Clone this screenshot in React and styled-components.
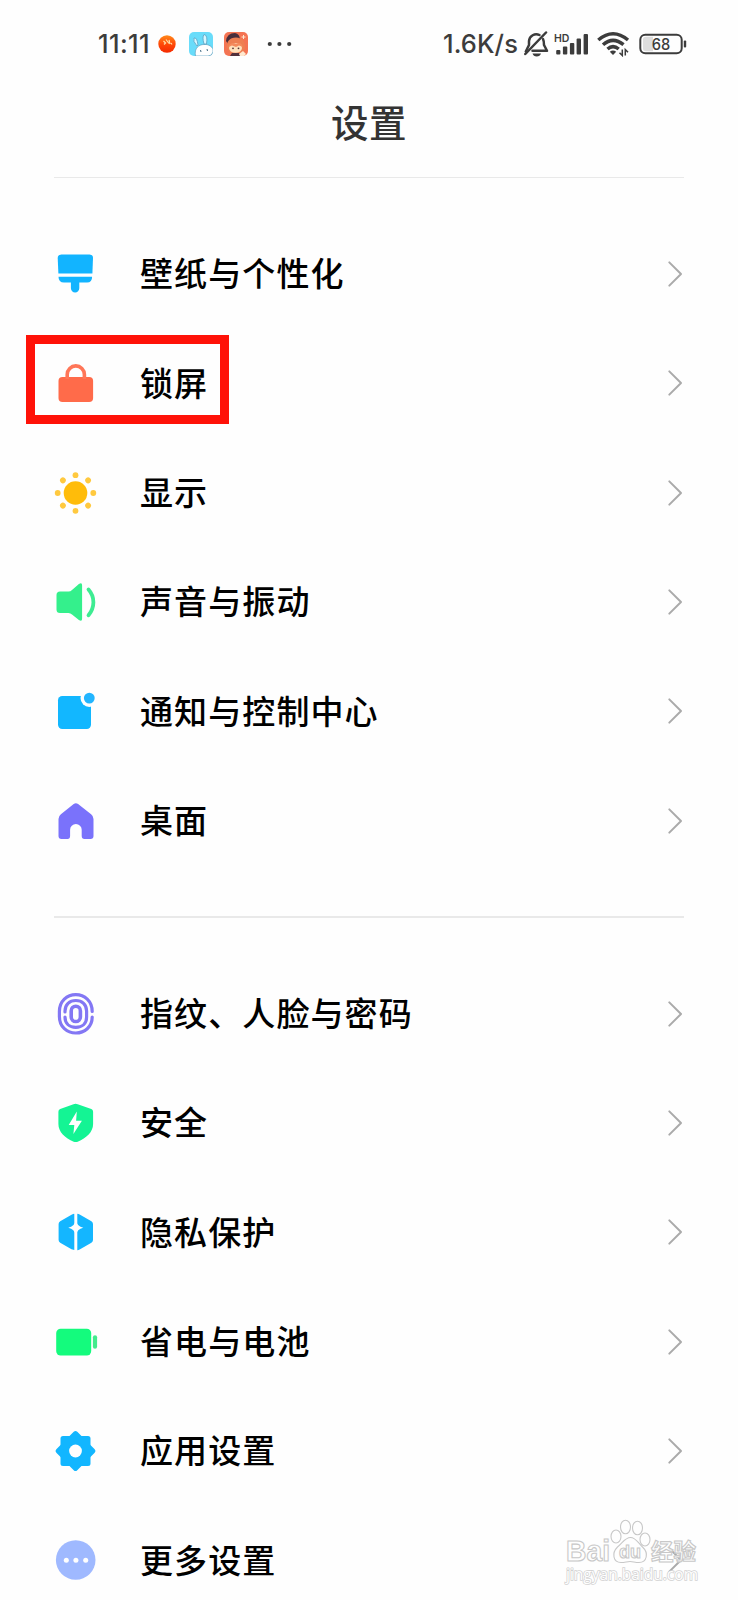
import React from "react";
import styled, { createGlobalStyle } from "styled-components";

const GlobalStyle = createGlobalStyle`
  * { box-sizing: border-box; }
  body { margin: 0; background: #fefefe; }
`;

const Screen = styled.div`
  position: relative;
  width: 738px;
  height: 1600px;
  overflow: hidden;
  background: #fefefe;
  color: #000;
  font-family: "Noto Sans CJK SC", "Noto Sans", sans-serif;
`;

const StatusBar = styled.header`
  display: flex;
  justify-content: space-between;
  height: 88px;
  padding: 0 51px 0 98px;
  color: #3c3c3c;
`;

const StatusGroup = styled.div`
  display: flex;
  align-items: center;
`;

const StatusText = styled.span`
  width: ${(p) => p.$width}px;
  font-family: Inter, sans-serif;
  font-size: 25.5px;
  font-weight: 500;
  line-height: 30px;
  letter-spacing: ${(p) => p.$spacing}px;
  white-space: nowrap;
`;

const StatusIcon = styled.svg`
  display: block;
  flex: none;
  margin-left: ${(p) => p.$gap || 0}px;
`;

const TitleBar = styled.div`
  height: 88.5px;
  display: flex;
  justify-content: center;
  padding-top: 5.5px;
`;

const Title = styled.h1`
  margin: 0;
  color: #333;
  font-size: 37.5px;
  line-height: 54px;
  letter-spacing: 0.6px;
  font-weight: 500;
`;

const Divider = styled.hr`
  height: 1.5px;
  margin: 0 54px;
  border: 0;
  background: #e9e9e9;
`;

const List = styled.ul`
  list-style: none;
  margin: 0;
  padding: ${(p) => p.$top}px 54px ${(p) => p.$bottom}px 53px;
`;

const Row = styled.li`
  position: relative;
  display: flex;
  align-items: center;
  height: 109.36px;
`;

const RowIcon = styled.svg`
  flex: none;
  width: 44px;
  height: 44px;
  overflow: visible;
`;

const Label = styled.span`
  flex: 1;
  margin-left: 43px;
  padding-bottom: 3.4px;
  font-size: 33px;
  line-height: 48px;
  letter-spacing: 1.1px;
  font-weight: 500;
`;

const Chevron = styled.svg`
  flex: none;
  width: 17px;
  height: 28px;
`;

const Highlight = styled.div`
  position: absolute;
  left: -27px;
  top: 6.3px;
  width: 203px;
  height: 89px;
  border: 9px solid #ff1208;
`;

const Watermark = styled.svg`
  position: absolute;
  left: 560px;
  top: 1510px;
`;

const icons = {
  brush: (
    <g fill="#12b4ff">
      <path d="M8 2.5H36Q39.6 2.5 39.5 6L38.9 21.6H4.9L4.2 6Q4.2 2.5 8 2.5Z" />
      <path d="M5 24.8H38.6Q38.7 30.6 33.5 30.6H25.8V36.3A4.2 4.2 0 0 1 17.4 36.3V30.6H10.5Q5 30.6 5 24.8Z" />
    </g>
  ),
  lock: (
    <g>
      <rect x="5" y="16" width="34.6" height="25" rx="4" fill="#ff6b4a" />
      <path d="M13.7 18V13.5A8.6 8.6 0 0 1 30.9 13.5V18" fill="none" stroke="#ff7658" strokeWidth="3.6" />
    </g>
  ),
  sun: (
    <g fill="#ffc93f">
      <circle cx="22" cy="22" r="11.8" fill="#ffbc0a" />
      {[0, 45, 90, 135, 180, 225, 270, 315].map((a) => (
        <circle key={a} cx="22" cy="4.2" r="2.9" transform={`rotate(${a} 22 22)`} />
      ))}
    </g>
  ),
  sound: (
    <g>
      <path d="M6.5 11.5H15Q17 11.5 18.5 10L25.4 4Q28.6 1.8 28.6 5.4V38.6Q28.6 42.2 25.4 40L18.5 34.5Q17 33 15 33H6.5Q3 33 3 29.5V15Q3 11.5 6.5 11.5Z" fill="#34f08c" />
      <path d="M35 9.5Q39.9 15 39.9 22.2T35 35.2" fill="none" stroke="#3eec92" strokeWidth="3.8" strokeLinecap="round" />
    </g>
  ),
  notify: (
    <g>
      <rect x="4.5" y="7" width="33" height="33" rx="4.2" fill="#12b7ff" />
      <circle cx="35.8" cy="9.1" r="8.8" fill="#fefefe" />
      <circle cx="35.8" cy="9.1" r="5.4" fill="#22b5ff" />
    </g>
  ),
  home: (
    <path d="M20.2 5Q22.4 3.5 24.6 5L37.6 15.2Q40 17 40 20V37Q40 40 37 40H31Q28.2 40 28.2 37V30.8A5.8 5.8 0 0 0 16.6 30.8V37Q16.6 40 14 40H8Q5 40 5 37V20Q5 17 7.4 15.2Z" fill="#7a72fb" />
  ),
  finger: (
    <g fill="none" stroke="#8377f4" strokeWidth="3.2" strokeLinecap="round">
      <path d="M38.7 19.5C38.7 9 31 2.6 22.3 2.6S5.9 9 5.9 19.5V24.5C5.9 35 13.6 41 22.3 41S38.7 35 38.7 25" />
      <path d="M11.5 20V19C11.5 12.5 16 8.5 22.3 8.5S33.1 12.5 33.1 19V25C33.1 31.5 28.6 35.3 22.3 35.3S11.5 31.5 11.5 25" />
      <rect x="17.7" y="14.3" width="9.2" height="15.2" rx="4.6" strokeWidth="3.6" />
    </g>
  ),
  shield: (
    <g>
      <path d="M20 3.2Q22 2.4 24.2 3.2L37.8 8Q39.6 8.8 39.6 10.8V23C39.6 31 33 37 24.2 40.7Q22.2 41.4 20.2 40.7C11.5 37 4.9 31 4.9 23V10.8Q4.9 8.8 6.7 8Z" fill="#14f494" />
      <path d="M23.3 10.5L15.2 24H20.8L19.9 33L28.4 19.7H22.6Z" fill="#fefefe" />
    </g>
  ),
  privacy: (
    <g>
      <path d="M20.8 4V40L18 39.2L6.7 32.7Q5.1 31.8 5.1 30V14Q5.1 12.2 6.7 11.3L18 4.8Q20.8 3.3 20.8 4ZM23.8 4V40Q23.8 40.7 26.6 39.2L37.9 32.7Q39.5 31.8 39.5 30V14Q39.5 12.2 37.9 11.3L26.6 4.8Q23.8 3.3 23.8 4Z" fill="#14b6ff" />
      <path d="M22.3 10Q23.5 16.6 29.8 17.8Q23.5 19 22.3 25.6Q21.1 19 14.8 17.8Q21.1 16.6 22.3 10Z" fill="#fefefe" />
    </g>
  ),
  battery: (
    <g fill="#14fb7d">
      <rect x="2.7" y="8.7" width="35" height="26.8" rx="4.4" />
      <rect x="39.4" y="15.2" width="4.2" height="13.6" rx="2.1" fill="#42eb8c" />
    </g>
  ),
  gear: (
    <g>
      <g fill="#12b6ff" stroke="#12b6ff" strokeWidth="5" strokeLinejoin="round">
        <rect x="9.5" y="9.5" width="25" height="25" />
        <rect x="9.7" y="9.7" width="24.6" height="24.6" transform="rotate(45 22 22)" />
      </g>
      <circle cx="22" cy="22" r="6.4" fill="#fefefe" />
    </g>
  ),
  more: (
    <g>
      <circle cx="22.2" cy="22" r="19.8" fill="#9fb9ff" />
      <g fill="#fefefe">
        <circle cx="12.8" cy="22.3" r="2.5" />
        <circle cx="22.4" cy="22.3" r="2.5" />
        <circle cx="32.2" cy="22.3" r="2.5" />
      </g>
    </g>
  ),
};

const personal = [
  { icon: "brush", label: "壁纸与个性化" },
  { icon: "lock", label: "锁屏", highlighted: true },
  { icon: "sun", label: "显示" },
  { icon: "sound", label: "声音与振动" },
  { icon: "notify", label: "通知与控制中心" },
  { icon: "home", label: "桌面" },
];

const system = [
  { icon: "finger", label: "指纹、人脸与密码" },
  { icon: "shield", label: "安全" },
  { icon: "privacy", label: "隐私保护" },
  { icon: "battery", label: "省电与电池" },
  { icon: "gear", label: "应用设置" },
  { icon: "more", label: "更多设置" },
];

function SettingsRow({ icon, label, highlighted }) {
  return (
    <Row>
      <RowIcon viewBox="-0.5 0 44 44">{icons[icon]}</RowIcon>
      <Label>{label}</Label>
      <Chevron viewBox="0 0 17 28">
        <path d="M2.3 2.4L14 14L2.3 25.6" fill="none" stroke="#aaa" strokeWidth="2" strokeLinecap="round" strokeLinejoin="round" />
      </Chevron>
      {highlighted && <Highlight />}
    </Row>
  );
}

function Status() {
  return (
    <StatusBar>
      <StatusGroup>
        <StatusText $width={60} $spacing={0.4}>11:11</StatusText>
        <StatusIcon width="18" height="18" viewBox="0 0 18 18">
          <defs>
            <linearGradient id="ball" x1="0" y1="0" x2="0" y2="1">
              <stop offset="0" stopColor="#ff8a1c" />
              <stop offset="0.5" stopColor="#ff4a08" />
              <stop offset="1" stopColor="#f42a00" />
            </linearGradient>
          </defs>
          <circle cx="9" cy="9" r="8.7" fill="url(#ball)" />
          <path d="M5.5 6L8 8.5M8 4.5L11 8.5M11 5L12 9M6 8.5L7 9.5M13 8L14 9.5" stroke="#ffe0a8" strokeWidth="1.2" />
        </StatusIcon>
        <StatusIcon $gap={13} width="24" height="24" viewBox="0 0 24 24">
          <rect width="24" height="24" rx="5" fill="#69dcfa" />
          <path d="M6.5 24C5 16 10 12.5 15 12.5C20 12 23 15 24 17V20Q23 24 19 24Z" fill="#fff" stroke="#5a9fc0" strokeWidth="0.7" />
          <path d="M8 14Q3.5 9 5 6Q8 5 9 13ZM15 12Q13 5 15 2.5Q19 3 17.5 12Z" fill="#d8f7ff" stroke="#5a9fc0" strokeWidth="0.8" />
          <path d="M11.5 18L12 20M18 17L18.5 19" stroke="#426b83" strokeWidth="1" />
        </StatusIcon>
        <StatusIcon $gap={10.5} width="24" height="24" viewBox="0 0 24 24">
          <rect width="24" height="24" rx="5" fill="#f47453" />
          <path d="M2 9Q3 1 11 1Q16 2 16 8L4 12Z" fill="#482f3c" />
          <path d="M3 16Q2 6 12 5.5Q22 6 21 17L18 21H6Z" fill="#ee7f52" />
          <ellipse cx="11.5" cy="16" rx="6.5" ry="4.8" fill="#ffe2bd" />
          <path d="M4.5 15Q7 9 12 12Q17 9 19 15L15 13.5L12 15L8 13.5Z" fill="#f58a5c" />
          <circle cx="9" cy="16.3" r="0.9" fill="#573438" />
          <circle cx="14.5" cy="16.3" r="0.9" fill="#573438" />
          <path d="M6 24L8 21H15L17 24Z" fill="#51313c" />
          <path d="M15 22L19 19L22 22L20 24H16Z" fill="#ffe9d0" />
          <path d="M19.5 3V7M17.5 5H21.5" stroke="#ffe9d0" strokeWidth="1" />
        </StatusIcon>
        <StatusIcon $gap={19} width="26" height="6" viewBox="0 0 26 6">
          <g fill="#3c3c3c">
            <circle cx="2.8" cy="3" r="2.1" />
            <circle cx="12.4" cy="3" r="2.1" />
            <circle cx="22.2" cy="3" r="2.1" />
          </g>
        </StatusIcon>
      </StatusGroup>
      <StatusGroup>
        <StatusText $width={81} $spacing={0.1}>1.6K/s</StatusText>
        <StatusIcon width="26" height="28" viewBox="1 0 26 28">
          <g fill="none" stroke="#3c3c3c" strokeWidth="2.5" strokeLinecap="round" strokeLinejoin="round">
            <path d="M16.5 5A7.3 7.3 0 0 0 6 11V15L2.8 21.5" />
            <path d="M20 9Q21 11 21 15L24 20.8H9.5" />
            <path d="M23 2.5L2.3 24" />
          </g>
          <path d="M9.5 23.5H18Q17 26.5 13.7 26.5T9.5 23.5Z" fill="#3c3c3c" />
        </StatusIcon>
        <StatusIcon $gap={4} width="37" height="24" viewBox="0.6 0 37 24">
          <text x="0.5" y="10.3" fontFamily="Inter, sans-serif" fontWeight="600" fontSize="10.5" textLength="15.5" fill="#3c3c3c">HD</text>
          <g fill="#3c3c3c">
            <rect x="2.8" y="18" width="4.2" height="4.5" rx="1" />
            <rect x="9.5" y="14.5" width="4.4" height="8" rx="1" />
            <rect x="16.5" y="11" width="4.4" height="11.5" rx="1" />
            <rect x="23.2" y="6.5" width="4.4" height="16" rx="1" />
            <rect x="30.2" y="2" width="4.4" height="20.5" rx="1" />
          </g>
        </StatusIcon>
        <StatusIcon $gap={6} width="33" height="26" viewBox="0 0 33 26">
          <g fill="none" stroke="#3c3c3c" strokeWidth="3.5">
            <path d="M1.3 9Q16 -3.5 31 9" />
            <path d="M6 13.7Q16 5 26.5 13.7" />
            <path d="M10.5 18Q16 13.3 21.7 18" />
          </g>
          <path d="M12.8 20.7Q16 18.5 19.2 20.7L16 24Z" fill="#3c3c3c" />
          <path d="M25.3 18.5V24.5L22.5 21.8M28.3 24.5V18.5L31 21.3" fill="none" stroke="#3c3c3c" strokeWidth="1.5" />
        </StatusIcon>
        <StatusIcon $gap={9} width="48" height="22" viewBox="0 0 48 22">
          <rect x="1.3" y="1.7" width="41.4" height="18.6" rx="5" fill="none" stroke="#3c3c3c" strokeWidth="2" />
          <path d="M7 3.7H14V18.3H7Q4 18.3 4 15.5V6.5Q4 3.7 7 3.7Z" fill="#dedede" />
          <rect x="44.8" y="7.5" width="2.4" height="7" rx="1" fill="#3c3c3c" />
          <text x="22" y="16.7" textAnchor="middle" fontFamily="Inter, sans-serif" fontWeight="500" fontSize="15.5" textLength="18.5" lengthAdjust="spacingAndGlyphs" fill="#3c3c3c">68</text>
        </StatusIcon>
      </StatusGroup>
    </StatusBar>
  );
}

function BaiduMark() {
  return (
    <Watermark width="150" height="90" viewBox="0 0 150 90">
      <g fill="#fefefe" fillOpacity="0.75" stroke="#c8c8c8" strokeWidth="1.1" fontWeight="700" fontFamily="Liberation Sans, sans-serif">
        <text x="6" y="51" fontSize="30" textLength="44" lengthAdjust="spacingAndGlyphs">Bai</text>
        <ellipse cx="56" cy="26.5" rx="5" ry="6.5" />
        <ellipse cx="65.5" cy="17" rx="5" ry="6.8" />
        <ellipse cx="77.5" cy="18" rx="5" ry="6.8" />
        <ellipse cx="85" cy="29.5" rx="5" ry="6.5" />
        <path d="M70.5 27.5C76 27.5 78 33 82.5 37C89 43 87 52.5 79 52.5C75 52.5 73 51.5 70 51.5S65 52.5 61 52.5C53 52.5 51.5 43 57.5 37C62.5 33 65 27.5 70.5 27.5Z" />
        <text x="59" y="48.3" fontSize="19" textLength="22" lengthAdjust="spacingAndGlyphs">du</text>
        <text x="91" y="50" fontSize="22.5" textLength="45" fontFamily="Noto Sans CJK SC, sans-serif">经验</text>
        <text x="6" y="69.5" fontSize="16.5" fontWeight="400" strokeWidth="1.6" paintOrder="stroke" fillOpacity="1" stroke="#d2d2d2" textLength="132" lengthAdjust="spacingAndGlyphs" fontFamily="Open Sans, sans-serif">jingyan.baidu.com</text>
      </g>
    </Watermark>
  );
}

export default function App() {
  return (
    <Screen>
      <GlobalStyle />
      <Status />
      <TitleBar>
        <Title>设置</Title>
      </TitleBar>
      <Divider />
      <List $top={41.3} $bottom={41}>
        {personal.map((item) => (
          <SettingsRow key={item.icon} {...item} />
        ))}
      </List>
      <Divider />
      <List $top={41} $bottom={0}>
        {system.map((item) => (
          <SettingsRow key={item.icon} {...item} />
        ))}
      </List>
      <BaiduMark />
    </Screen>
  );
}
